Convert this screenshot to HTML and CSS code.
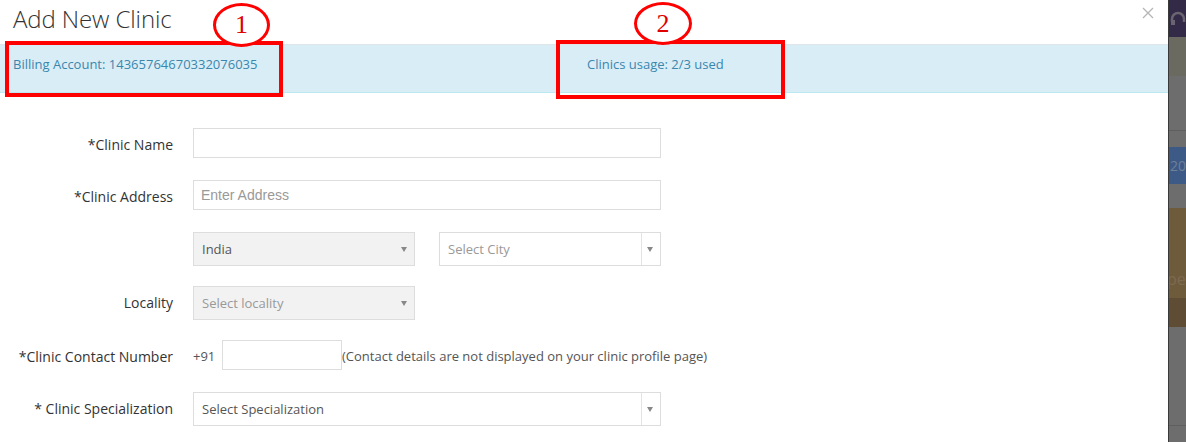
FILE: index.html
```html
<!DOCTYPE html>
<html>
<head>
<meta charset="utf-8">
<link rel="stylesheet" href="styles.css">
</head>
<body>
<div class="page">
  <div class="modal">
    <div class="modal-header">
      <h3 class="title">Add New Clinic</h3>
      <svg class="close" width="12" height="12" viewBox="0 0 12 12"><path d="M1 1 L11 11 M11 1 L1 11" stroke="#b5b5b5" stroke-width="1.3" fill="none"/></svg>
    </div>
    <div class="alert">
      <span class="billing">Billing Account: 14365764670332076035</span>
      <span class="usage">Clinics usage: 2/3 used</span>
    </div>
    <form class="form">
      <div class="row">
        <label class="lbl">*Clinic Name</label>
        <div class="field"><div class="input wide"></div></div>
      </div>
      <div class="row">
        <label class="lbl">*Clinic Address</label>
        <div class="field"><div class="input wide"><span class="ph">Enter Address</span></div></div>
      </div>
      <div class="row">
        <label class="lbl"></label>
        <div class="field pair">
          <div class="select grey"><span class="val">India</span><span class="arrow"></span></div>
          <div class="select"><span class="val muted">Select City</span><span class="sep"></span><span class="arrow"></span></div>
        </div>
      </div>
      <div class="row">
        <label class="lbl">Locality</label>
        <div class="field"><div class="select grey"><span class="val muted">Select locality</span><span class="arrow"></span></div></div>
      </div>
      <div class="row">
        <label class="lbl">*Clinic Contact Number</label>
        <div class="field contact"><span class="code">+91</span><div class="input small"></div><span class="help">(Contact details are not displayed on your clinic profile page)</span></div>
      </div>
      <div class="row">
        <label class="lbl">* Clinic Specialization</label>
        <div class="field"><div class="select wide"><span class="val">Select Specialization</span><span class="sep"></span><span class="arrow"></span></div></div>
      </div>
    </form>
    <div class="mark rect r1"></div>
    <div class="mark rect r2"></div>
    <div class="mark oval o1">1</div>
    <div class="mark oval o2">2</div>
  </div>
  <div class="backdrop">
    <div class="bd purple"><svg class="headset" width="16" height="16" viewBox="0 0 16 16"><path d="M2 11 V8 a6 6 0 0 1 12 0 v3" stroke="#6a6470" stroke-width="2.5" fill="none"/><rect x="1" y="9" width="4" height="5" fill="#6a6470"/></svg></div>
    <div class="bd olive"></div>
    <div class="bd gray g1"></div>
    <div class="bd gray g2"></div>
    <div class="bd blue">20</div>
    <div class="bd gray g3"></div>
    <div class="bd brown"><span class="pe">pe</span></div>
    <div class="bd dbrown"></div>
    <div class="bd gray g4"></div>
    <div class="bd gray g5"></div>
  </div>
</div>
</body>
</html>
```

FILE: styles.css
```css
* { box-sizing: border-box; }
html, body { margin: 0; padding: 0; background: #fff; }
body { font-family: "Open Sans", "DejaVu Sans", sans-serif; color: #333; width: 1186px; height: 442px; overflow: hidden; }

.page { display: flex; height: 442px; }
.modal { position: relative; width: 1168px; background: #fff; }

.modal-header { height: 44px; padding: 6px 0 0 13px; display: flex; justify-content: space-between; align-items: flex-start; }
.title { margin: 0; font-size: 24px; font-weight: 300; line-height: 26px; color: #333; letter-spacing: -0.1px; }
.close { margin: 1px 14px 0 0; }

.alert { display: flex; height: 49px; background: #d9edf7; border-top: 1px solid #dfe6ea; border-bottom: 1px solid #bce8f1; padding: 10px 0 0 13px; font-size: 13px; line-height: 18px; color: #3a87ad; }
.billing { flex: 0 0 574px; }

.form { padding-top: 35px; }
.row { display: grid; grid-template-columns: 173px 1fr; column-gap: 20px; align-items: start; margin-bottom: 22px; }
.row:nth-child(3), .row:nth-child(4) { margin-bottom: 20px; }
.lbl { text-align: right; font-size: 14px; color: #333; line-height: 20px; padding-top: 7px; }
.field { display: flex; align-items: center; }
.pair { gap: 24px; }

.input { height: 30px; border: 1px solid #ddd; background: #fff; display: flex; align-items: center; padding-left: 7px; }
.input.wide { width: 468px; }
.input.small { width: 120px; }
.ph { font-family: "Liberation Sans", Arial, sans-serif; font-size: 14px; color: #999; }

.select { position: relative; width: 222px; height: 34px; border: 1px solid #ddd; background: #fff; display: flex; align-items: center; padding-left: 8px; font-size: 13px; color: #555; }
.select.grey { background: #f2f2f2; }
.select.wide { width: 468px; }
.val.muted { color: #999; }
.sep { position: absolute; right: 18px; top: 0; bottom: 0; border-left: 1px solid #e3e3e3; }
.arrow { position: absolute; right: 7px; top: 14px; width: 0; height: 0; border-left: 3.5px solid transparent; border-right: 3.5px solid transparent; border-top: 5px solid #888; }

.contact { font-size: 13px; color: #555; align-items: flex-start; }
.code, .help { line-height: 18px; padding-top: 7px; }
.code { width: 29px; }
.help { white-space: nowrap; }

.mark { position: absolute; border: 4px solid #ff0000; }
.rect.r1 { left: 5px; top: 41px; width: 278px; height: 56px; }
.rect.r2 { left: 556px; top: 40px; width: 229px; height: 59px; }
.oval { border-width: 3px; border-radius: 50%; font-family: "Liberation Serif", serif; font-size: 26px; color: #e00000; display: flex; align-items: center; justify-content: center; line-height: 1; background: #fff; }
.oval.o1 { left: 213px; top: 3px; width: 57px; height: 44px; }
.oval.o2 { left: 634px; top: 2px; width: 58px; height: 43px; }

.backdrop { width: 18px; border-left: 1px solid #3a3a3a; box-shadow: inset 2px 0 2px rgba(0,0,0,0.25); display: flex; flex-direction: column; overflow: hidden; }
.bd { flex: none; }
.purple { height: 37px; background: #332a47; position: relative; }
.headset { position: absolute; left: 1px; top: 11px; }
.olive { height: 39px; background: #6b6a60; }
.gray { background: #6d6d6d; }
.g1 { height: 55px; border-bottom: 1px solid #5f5f5f; }
.g2 { height: 16px; }
.blue { height: 37px; background: #3d5a86; color: #6f7f96; font-size: 14px; line-height: 37px; padding-left: 1px; font-family: "Open Sans", sans-serif; }
.g3 { height: 24px; }
.brown { height: 90px; background: #6e5b3c; position: relative; }
.pe { position: absolute; left: -2px; top: 60px; font-size: 16px; color: #7c6a50; }
.dbrown { height: 29px; background: #5e4d34; }
.g4 { height: 99px; border-bottom: 1px solid #5f5f5f; }
.g5 { height: 20px; }
```
